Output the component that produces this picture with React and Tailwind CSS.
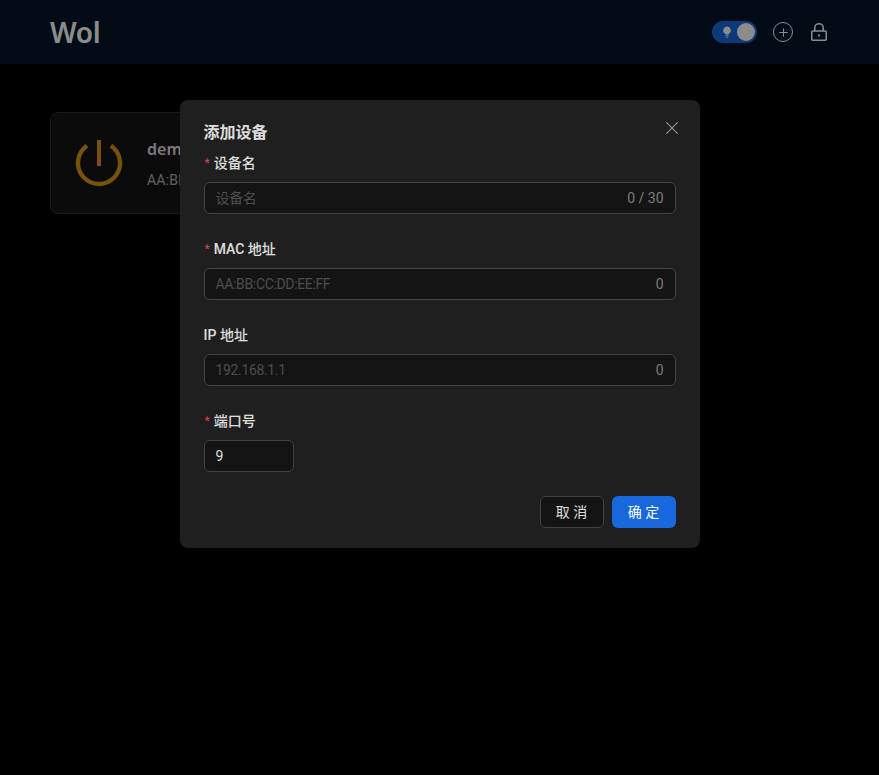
import { Plus, X } from 'lucide-react';

function PowerIcon() {
  return (
    <svg width="48" height="48" viewBox="0 0 48 48" fill="none" className="text-[#d89614]">
      <path d="M12 6.7 A21 21 0 1 0 36 6.7" stroke="currentColor" strokeWidth="4.4" />
      <rect x="22" y="1" width="4" height="26" fill="currentColor" />
    </svg>
  );
}

function BulbIcon() {
  return (
    <svg width="10" height="12" viewBox="0 0 12 14" fill="currentColor">
      <path d="M6 0.5a4.6 4.6 0 0 0-2.6 8.4c.4.3.6.7.6 1.1h4c0-.4.2-.8.6-1.1A4.6 4.6 0 0 0 6 .5z" />
      <rect x="4" y="11" width="4" height="1" />
      <rect x="4.5" y="12.6" width="3" height="1" />
    </svg>
  );
}

function LockIcon() {
  return (
    <svg width="16" height="18" viewBox="0 0 16 18" fill="none" stroke="currentColor" strokeWidth="1.5">
      <rect x="0.75" y="8" width="14.5" height="9.2" rx="1" />
      <path d="M3.8 8V4.6a4.2 3.8 0 0 1 8.4 0V8" />
      <rect x="7" y="11.5" width="2" height="2" fill="currentColor" stroke="none" />
    </svg>
  );
}

function Label({ required, children }) {
  return (
    <label className="mb-2 flex h-[22px] items-center text-sm font-medium text-white/85">
      {required && <span className="ml-px mr-1 text-xs font-normal text-[#dc4446]">*</span>}
      {children}
    </label>
  );
}

function Field({ label, required, placeholder, count }) {
  return (
    <div className="mb-6">
      <Label required={required}>{label}</Label>
      <div className="flex h-8 items-center rounded-md border border-[#424242] bg-[#141414] px-[11px]">
        <input
          placeholder={placeholder}
          className="min-w-0 flex-1 bg-transparent text-sm tracking-[-0.35px] text-white/85 outline-none placeholder:text-white/25"
        />
        <span className="ml-1 text-sm text-white/45">{count}</span>
      </div>
    </div>
  );
}

export default function App() {
  return (
    <div className='min-h-screen bg-black font-["Roboto","Noto_Sans_CJK_SC",sans-serif] text-white'>
      <header className="flex h-16 items-center justify-between bg-[#001529] pl-[50px] pr-[52px]">
        <h1 className='font-["Noto_Sans",sans-serif] text-[28px] font-semibold leading-none tracking-[-0.3px]'>Wol</h1>
        <div className="flex items-center text-white">
          <div className="flex h-[22px] w-[45px] items-center justify-between rounded-full bg-[#1668dc] pl-[10px] pr-[2px]">
            <BulbIcon />
            <div className="h-[18px] w-[18px] rounded-full bg-white" />
          </div>
          <div className="ml-4 flex h-5 w-5 items-center justify-center rounded-full border-[1.5px] border-white">
            <Plus size={13} strokeWidth={2} />
          </div>
          <div className="ml-[18px]">
            <LockIcon />
          </div>
        </div>
      </header>

      <main className="px-[50px] pt-12">
        <div className="flex h-[102px] w-[300px] items-center rounded-lg border border-[#303030] bg-[#141414] pl-6">
          <PowerIcon />
          <div className="ml-6 pt-px">
            <div className='font-["Noto_Sans",sans-serif] text-base font-semibold text-white/85'>demo</div>
            <div className="mt-[9px] text-sm tracking-[0.2px] text-white/65">AA:BB:CC:DD:EE:FF</div>
          </div>
        </div>
      </main>

      <div className="fixed inset-0 flex items-start justify-center bg-black/45 pt-[100px]">
        <div className="relative w-[520px] rounded-lg bg-[#1f1f1f] px-6 pb-5 pt-[21px]">
          <button className="absolute right-[17px] top-[17px] text-white/45">
            <X size={22} strokeWidth={1.2} />
          </button>
          <h2 className="mb-[7px] text-base font-semibold leading-6 text-white/85">添加设备</h2>
          <Field label="设备名" required placeholder="设备名" count="0 / 30" />
          <Field label="MAC 地址" required placeholder="AA:BB:CC:DD:EE:FF" count="0" />
          <Field label="IP 地址" placeholder="192.168.1.1" count="0" />
          <div className="mb-6">
            <Label required>端口号</Label>
            <input
              defaultValue="9"
              className="h-8 w-[90px] rounded-md border border-[#424242] bg-[#141414] px-[11px] text-sm text-white/85 outline-none"
            />
          </div>
          <div className="flex justify-end gap-2">
            <button className="h-8 w-16 rounded-md border border-[#424242] bg-[#141414] text-sm text-white/85">取 消</button>
            <button className="h-8 w-16 rounded-md bg-[#1668dc] text-sm text-white">确 定</button>
          </div>
        </div>
      </div>
    </div>
  );
}
